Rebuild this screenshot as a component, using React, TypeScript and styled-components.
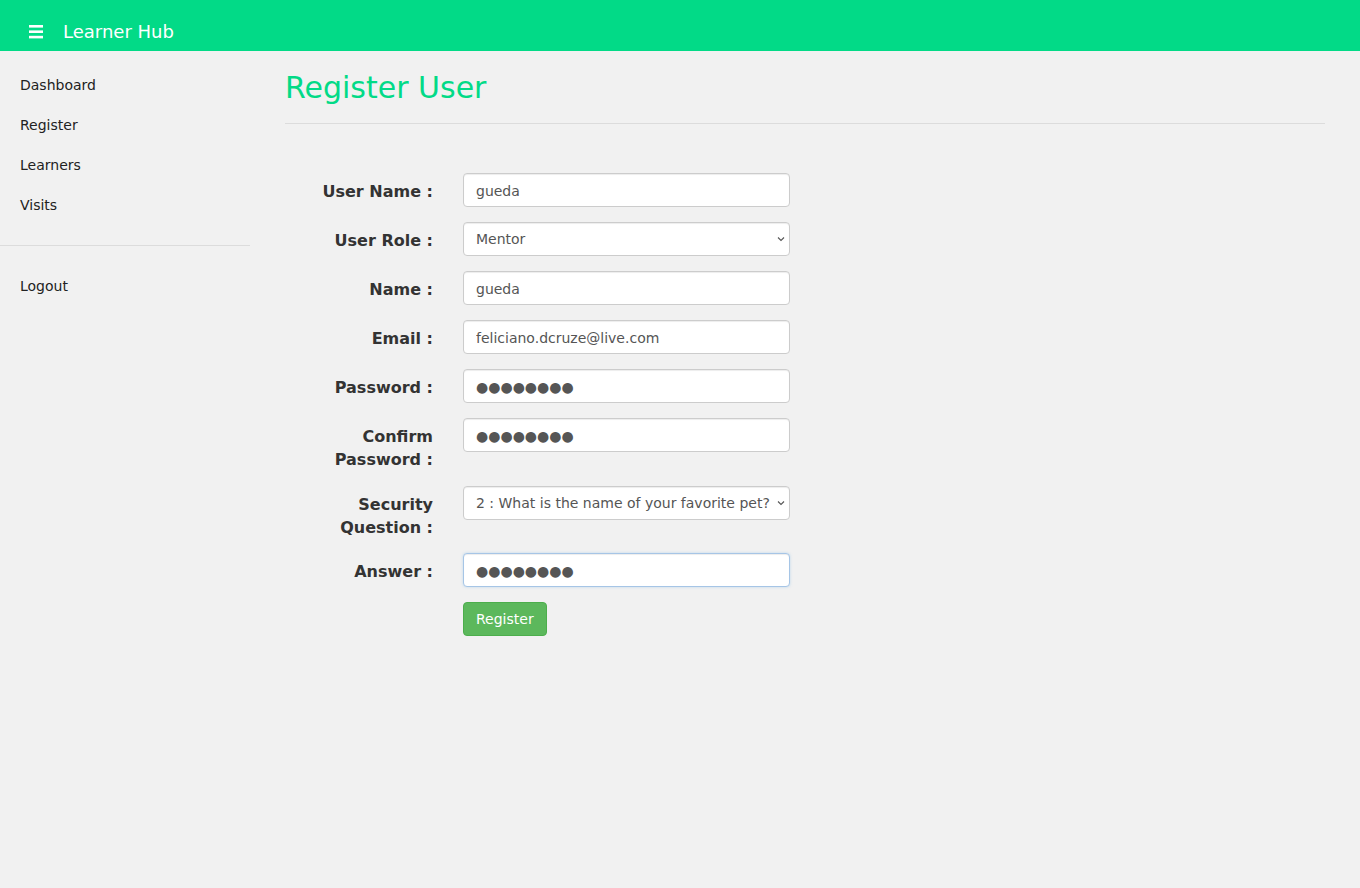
import React from "react";
import styled, { createGlobalStyle } from "styled-components";

const GlobalStyle = createGlobalStyle`
  html, body {
    margin: 0;
    padding: 0;
    background: #f1f1f1;
    font-family: "DejaVu Sans", sans-serif;
    font-size: 14px;
    line-height: 1.42857;
    color: #333;
  }
  * { box-sizing: border-box; }
`;

const Page = styled.div`
  min-height: 888px;
  display: flex;
  flex-direction: column;
`;

const TopBar = styled.header`
  height: 51px;
  background: #02da87;
  display: flex;
  align-items: center;
  padding: 13px 0 0 29px;
  gap: 20px;
`;

const MenuIcon = styled.svg`
  width: 14px;
  height: 14px;
  display: block;
`;

const Brand = styled.span`
  color: #fff;
  font-size: 18px;
  line-height: 20px;
`;

const Body = styled.div`
  display: flex;
  flex: 1;
`;

const Sidebar = styled.nav`
  width: 250px;
  flex-shrink: 0;
  padding-top: 15px;
  display: flex;
  flex-direction: column;
`;

const NavItem = styled.a`
  display: flex;
  align-items: center;
  height: 40px;
  padding-left: 20px;
  color: #222;
  font-size: 14px;
  text-decoration: none;
`;

const NavDivider = styled.hr`
  margin: 19px 0 21px;
  border: 0;
  border-top: 1px solid #dcdcdc;
  width: 250px;
`;

const Main = styled.main`
  flex: 1;
  padding: 0 35px;
`;

const Title = styled.h2`
  margin: 20px 0 0;
  font-size: 30px;
  font-weight: 400;
  line-height: 33px;
  color: #02da87;
`;

const Rule = styled.hr`
  margin: 19px 0 0;
  border: 0;
  border-top: 1px solid #dcdcdc;
`;

const Form = styled.form`
  margin-top: 49px;
  display: grid;
  grid-template-columns: 148px 327px;
  column-gap: 30px;
  row-gap: 15px;
  align-items: start;
`;

const Label = styled.label`
  padding-top: 8px;
  margin-bottom: -1px;
  text-align: right;
  font-size: 16px;
  font-weight: 700;
  line-height: 1.42857;
  color: #333;
`;

const controlBase = `
  display: block;
  width: 100%;
  height: 34px;
  font-family: "DejaVu Sans", sans-serif;
  font-size: 14px;
  line-height: 20px;
  color: #555;
  background: #fff;
  border-radius: 4px;
  outline: none;
`;

const Field = styled.input<{ $focused?: boolean }>`
  ${controlBase}
  padding: 7px 12px 5px;
  border: 1px solid ${(p) => (p.$focused ? "#a6c5e6" : "#ccc")};
  box-shadow: inset 0 1px 1px rgba(0, 0, 0, 0.075)
    ${(p) => (p.$focused ? ", 0 0 3px rgba(102, 175, 233, 0.35)" : "")};
`;

const SelectWrap = styled.div`
  position: relative;
`;

const Select = styled.select`
  ${controlBase}
  appearance: none;
  -webkit-appearance: none;
  padding: 6px 18px 6px 12px;
  border: 1px solid #ccc;
  box-shadow: inset 0 1px 1px rgba(0, 0, 0, 0.075);
  white-space: nowrap;
  overflow: hidden;
`;

const Chevron = styled.svg`
  position: absolute;
  right: 5px;
  top: 14px;
  width: 8px;
  height: 6px;
  pointer-events: none;
`;

const Spacer = styled.div``;

const Button = styled.button`
  justify-self: start;
  height: 34px;
  padding: 6px 12px;
  font-family: "DejaVu Sans", sans-serif;
  font-size: 14px;
  line-height: 20px;
  color: #fff;
  background: #5cb85c;
  border: 1px solid #4cae4c;
  border-radius: 4px;
  cursor: pointer;
`;

const DOTS = "\u25CF\u25CF\u25CF\u25CF\u25CF\u25CF\u25CF\u25CF";

function ChevronIcon() {
  return (
    <Chevron viewBox="0 0 8 6" aria-hidden="true">
      <path d="M1 1.5 L4 4.5 L7 1.5" fill="none" stroke="#555" strokeWidth="1.1" />
    </Chevron>
  );
}

export default function App() {
  return (
    <Page>
      <GlobalStyle />
      <TopBar>
        <MenuIcon viewBox="0 0 14 14" aria-hidden="true">
          <rect x="0" y="0" width="14" height="2.6" fill="#fff" />
          <rect x="0" y="5.4" width="14" height="2.6" fill="#fff" />
          <rect x="0" y="10.8" width="14" height="2.6" fill="#fff" />
        </MenuIcon>
        <Brand>Learner Hub</Brand>
      </TopBar>
      <Body>
        <Sidebar>
          <NavItem href="#">Dashboard</NavItem>
          <NavItem href="#">Register</NavItem>
          <NavItem href="#">Learners</NavItem>
          <NavItem href="#">Visits</NavItem>
          <NavDivider />
          <NavItem href="#">Logout</NavItem>
        </Sidebar>
        <Main>
          <Title>Register User</Title>
          <Rule />
          <Form onSubmit={(e) => e.preventDefault()}>
            <Label>User Name :</Label>
            <Field type="text" defaultValue="gueda" />
            <Label>User Role :</Label>
            <SelectWrap>
              <Select defaultValue="Mentor">
                <option>Admin</option>
                <option>Mentor</option>
                <option>Learner</option>
              </Select>
              <ChevronIcon />
            </SelectWrap>
            <Label>Name :</Label>
            <Field type="text" defaultValue="gueda" />
            <Label>Email :</Label>
            <Field type="email" defaultValue="feliciano.dcruze@live.com" />
            <Label>Password :</Label>
            <Field type="text" readOnly value={DOTS} aria-label="Password" />
            <Label>
              Confirm
              <br />
              Password :
            </Label>
            <Field type="text" readOnly value={DOTS} aria-label="Confirm password" />
            <Label>
              Security
              <br />
              Question :
            </Label>
            <SelectWrap>
              <Select defaultValue="2">
                <option value="1">1 : What is your mother's maiden name?</option>
                <option value="2">2 : What is the name of your favorite pet?</option>
                <option value="3">3 : What city were you born in?</option>
              </Select>
              <ChevronIcon />
            </SelectWrap>
            <Label>Answer :</Label>
            <Field type="text" readOnly value={DOTS} aria-label="Answer" $focused />
            <Spacer />
            <Button type="submit">Register</Button>
          </Form>
        </Main>
      </Body>
    </Page>
  );
}
